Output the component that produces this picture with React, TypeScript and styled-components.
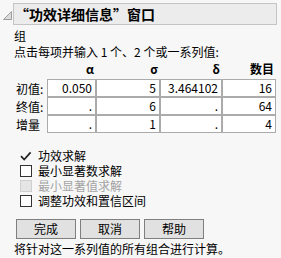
import { FunctionComponent } from "react";
import styled, { createGlobalStyle } from "styled-components";

const GlobalStyle = createGlobalStyle`
  body {
    margin: 0;
    background: #f7f7f7;
    font-family: "Noto Sans CJK SC", "Liberation Sans", sans-serif;
    color: #000;
  }
`;

const Page = styled.div`
  width: 281px;
  height: 258px;
  overflow: hidden;
  font-size: 12px;
`;

const OutlineRow = styled.div`
  display: flex;
  align-items: flex-start;
  padding: 3px 4px 0 3px;
  gap: 1px;
`;

const Toggle = styled.svg`
  margin-top: 8px;
  flex: none;
`;

const TitleBox = styled.div`
  flex: 1;
  height: 20px;
  background: #ececec;
  border: 1px solid #c4c4c4;
  font-size: 14px;
  font-weight: bold;
  line-height: 20px;
  padding-left: 1px;
`;

const Body = styled.div`
  padding: 3px 0 0 14px;
`;

const Line = styled.div`
  line-height: 16px;
`;

const Grid = styled.div`
  display: grid;
  grid-template-columns: 33px 49px 64px 62px 54px;
  grid-template-rows: 19px 18px 18px 18px;
`;

const Head = styled.div`
  font-weight: bold;
  text-align: right;
  padding-right: 2px;
  line-height: 17px;
`;

const RowLabel = styled.div`
  display: flex;
  align-items: center;
  padding-left: 2px;
`;

const Cell = styled.div`
  background: #fff;
  border: 1px solid #ababab;
  text-align: right;
  padding-right: 3px;
  line-height: 16px;
`;

const Checks = styled.div`
  margin-top: 15px;
  padding-left: 6px;
  display: flex;
  flex-direction: column;
`;

const CheckRow = styled.div<{ $disabled?: boolean }>`
  display: flex;
  align-items: center;
  gap: 6px;
  height: 15px;
  line-height: 15px;
  color: ${(p) => (p.$disabled ? "#a3a3a3" : "#000")};
`;

const Box = styled.span<{ $disabled?: boolean; $checked?: boolean }>`
  width: 12px;
  height: 12px;
  box-sizing: border-box;
  flex: none;
  display: flex;
  border: 1px solid
    ${(p) => (p.$checked ? "transparent" : p.$disabled ? "#cfcfcf" : "#333")};
  background: ${(p) => (p.$disabled ? "#e5e5e5" : p.$checked ? "transparent" : "#fff")};
`;

const Buttons = styled.div`
  display: flex;
  gap: 4px;
  margin-top: 11px;
  padding-left: 2px;
`;

const Button = styled.button`
  width: 60px;
  height: 20px;
  margin: 0;
  padding: 0;
  background: #e1e1e1;
  border: 1px solid #7f7f7f;
  font-family: inherit;
  font-size: 12px;
  color: #000;
  line-height: 18px;
`;

const Footer = styled.div`
  line-height: 16px;
  margin-top: 2px;
`;

const rows = [
  { label: "初值:", values: ["0.050", "5", "3.464102", "16"] },
  { label: "终值:", values: [".", "6", ".", "64"] },
  { label: "增量", values: [".", "1", ".", "4"] },
];

const options = [
  { text: "功效求解", checked: true },
  { text: "最小显著数求解" },
  { text: "最小显著值求解", disabled: true },
  { text: "调整功效和置信区间" },
];

const Check: FunctionComponent<{ checked?: boolean; disabled?: boolean }> = ({
  checked,
  disabled,
}) => (
  <Box $checked={checked} $disabled={disabled}>
    {checked && (
      <svg width="12" height="12" viewBox="0 0 12 12" style={{ margin: -1 }}>
        <path d="M1 6.2 L4.2 9.5 L10.6 2.4" fill="none" stroke="#222" strokeWidth="1.7" />
      </svg>
    )}
  </Box>
);

const App: FunctionComponent = () => (
  <Page>
    <GlobalStyle />
    <OutlineRow>
      <Toggle width="9" height="9" viewBox="0 0 9 9">
        <polygon points="0.5,8.5 8.5,8.5 8.5,0.5" fill="#dcdcdc" stroke="#9c9c9c" />
      </Toggle>
      <TitleBox>“功效详细信息”窗口</TitleBox>
    </OutlineRow>
    <Body>
      <Line>组</Line>
      <Line>点击每项并输入 1 个、2 个或一系列值:</Line>
      <Grid>
        <div />
        <Head>α</Head>
        <Head>σ</Head>
        <Head>δ</Head>
        <Head>数目</Head>
        {rows.map((r) => [
          <RowLabel key={r.label}>{r.label}</RowLabel>,
          ...r.values.map((v, i) => <Cell key={r.label + i}>{v}</Cell>),
        ])}
      </Grid>
      <Checks>
        {options.map((o) => (
          <CheckRow key={o.text} $disabled={o.disabled}>
            <Check checked={o.checked} disabled={o.disabled} />
            {o.text}
          </CheckRow>
        ))}
      </Checks>
      <Buttons>
        <Button>完成</Button>
        <Button>取消</Button>
        <Button>帮助</Button>
      </Buttons>
      <Footer>将针对这一系列值的所有组合进行计算。</Footer>
    </Body>
  </Page>
);

export default App;
